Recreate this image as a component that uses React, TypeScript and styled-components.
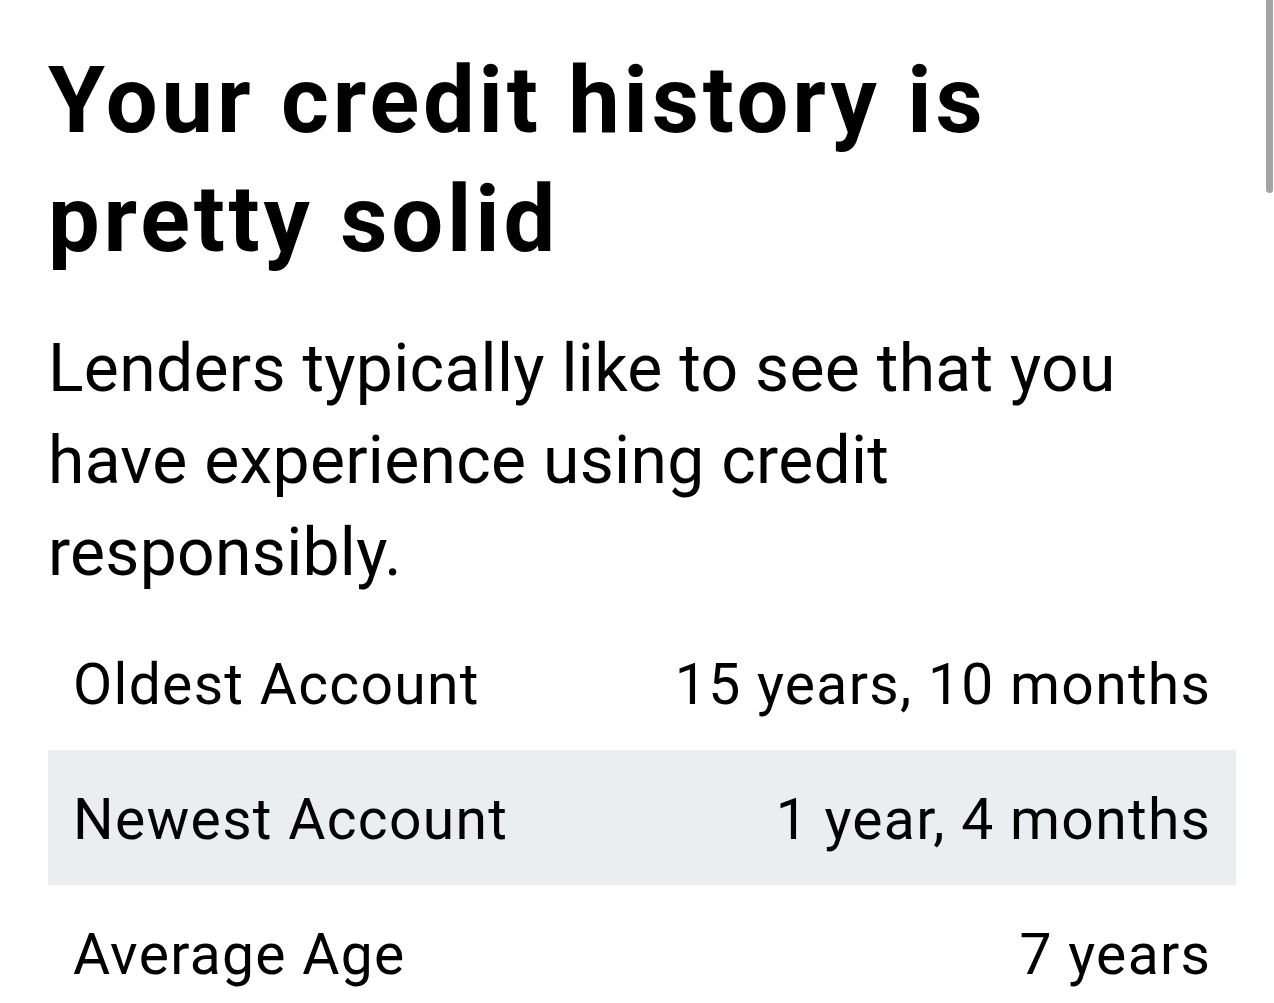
import React from "react";
import styled, { createGlobalStyle } from "styled-components";

const Global = createGlobalStyle`
  html, body { margin: 0; padding: 0; background: #ffffff; }
  body { font-family: Roboto, "Liberation Sans", sans-serif; color: #000; }
`;

const Page = styled.main`
  position: relative;
  width: 1274px;
  height: 1003px;
  overflow: hidden;
  box-sizing: border-box;
  padding: 41px 38px 0 48px;
  display: flex;
  flex-direction: column;
`;

const Heading = styled.h1`
  margin: 0;
  font-size: 92px;
  line-height: 119px;
  font-weight: 700;
  letter-spacing: 3.8px;
`;

const Lead = styled.p`
  margin: 44px 0 0;
  font-size: 66px;
  line-height: 92px;
  font-weight: 400;
  letter-spacing: 0.3px;
`;

const Table = styled.div`
  margin-top: 16px;
  display: flex;
  flex-direction: column;
`;

const Row = styled.div<{ $shaded?: boolean }>`
  height: 135px;
  box-sizing: border-box;
  padding: 4px 26px 0 25px;
  display: flex;
  align-items: center;
  justify-content: space-between;
  background: ${(p) => (p.$shaded ? "#eaeef1" : "transparent")};
  font-size: 57px;
  letter-spacing: 1.3px;
`;

const Label = styled.span``;
const Value = styled.span`
  margin-right: -1.3px;
`;

const Scrollbar = styled.div`
  position: absolute;
  top: 0;
  right: 1px;
  width: 7px;
  height: 193px;
  border-radius: 0 0 4px 4px;
  background: #a4a4a4;
`;

const rows = [
  { label: "Oldest Account", value: "15 years, 10 months" },
  { label: "Newest Account", value: "1 year, 4 months" },
  { label: "Average Age", value: "7 years" },
];

export default function App() {
  return (
    <>
      <Global />
      <Page>
        <Heading>
          Your credit history is
          <br />
          pretty solid
        </Heading>
        <Lead>
          Lenders typically like to see that you
          <br />
          have experience using credit
          <br />
          responsibly.
        </Lead>
        <Table>
          {rows.map((r, i) => (
            <Row key={r.label} $shaded={i % 2 === 1}>
              <Label>{r.label}</Label>
              <Value>{r.value}</Value>
            </Row>
          ))}
        </Table>
        <Scrollbar />
      </Page>
    </>
  );
}
